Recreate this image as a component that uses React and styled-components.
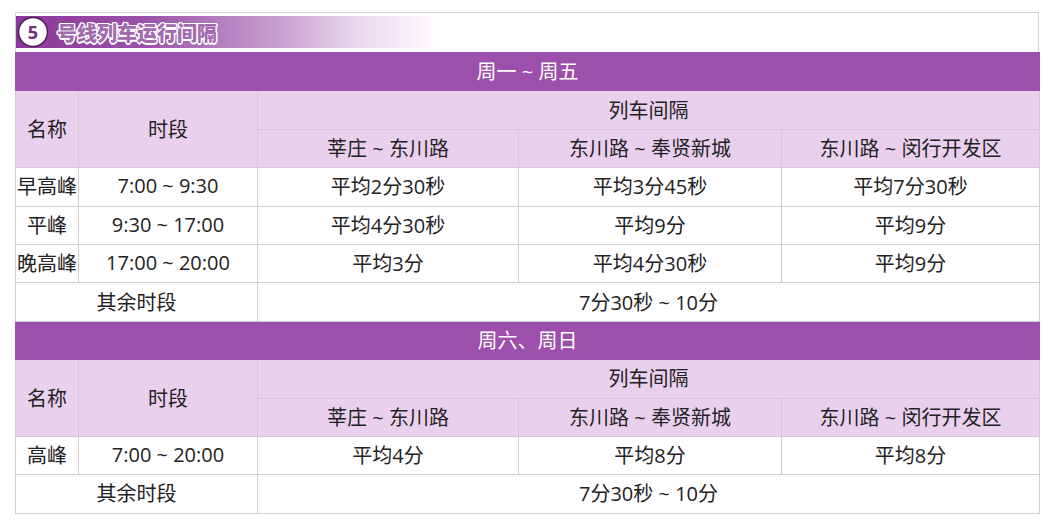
import styled, { createGlobalStyle } from "styled-components";

const GlobalStyle = createGlobalStyle`
  html, body {
    margin: 0;
    padding: 0;
    background: #fff;
  }
  body {
    font-family: "Open Sans", "Noto Sans CJK SC", sans-serif;
    color: #222;
  }
`;

const Page = styled.div`
  padding: 12px 0 0 15px;
`;

const Frame = styled.section`
  width: 1022px;
  border: 1px solid #d4d4d4;
  border-bottom: none;
  padding-top: 3px;
`;

const TitleBar = styled.div`
  height: 32px;
  width: 425px;
  display: flex;
  align-items: center;
  gap: 8px;
  padding-left: 1px;
  background: linear-gradient(
    to right,
    #8a3897 0%,
    #9a52a8 30%,
    #c59ccd 60%,
    #ecdcef 82%,
    #ffffff 100%
  );
`;

const BadgeSvg = styled.svg`
  flex: 0 0 32px;
  display: block;
`;

const Title = styled.h2`
  margin: 0;
  font-family: "Noto Sans CJK SC", sans-serif;
  font-weight: 900;
  font-size: 20px;
  color: #a36ab0;
  text-shadow: -1px -1px 0 #fff, 1px -1px 0 #fff, -1px 1px 0 #fff,
    1px 1px 0 #fff, 0 -1.5px 0 #fff, 0 1.5px 0 #fff, -1.5px 0 0 #fff,
    1.5px 0 0 #fff, 0 0 2px #5a2a66;
`;

const Table = styled.table`
  margin-top: 4px;
  width: 1024px;
  margin-left: -1px;
  border-collapse: collapse;
  table-layout: fixed;
  font-size: 20px;
`;

const Row = styled.tr`
  height: 38.4px;
`;

const Cell = styled.td`
  border: 1px solid ${(p) => (p.$head ? "#d9c4de" : "#cfcfcf")};
  background: ${(p) => (p.$head ? "#e9d1ee" : "#fff")};
  text-align: center;
  vertical-align: middle;
  padding: 0 0 2px;
  white-space: nowrap;
  overflow: hidden;
`;

const BandCell = styled.td`
  background: #9c4fab;
  color: #fff;
  border: 1px solid #9c4fab;
  text-align: center;
  padding: 0 0 2px;
`;

const weekday = {
  band: "周一 ~ 周五",
  routes: ["莘庄 ~ 东川路", "东川路 ~ 奉贤新城", "东川路 ~ 闵行开发区"],
  rows: [
    ["早高峰", "7:00 ~ 9:30", "平均2分30秒", "平均3分45秒", "平均7分30秒"],
    ["平峰", "9:30 ~ 17:00", "平均4分30秒", "平均9分", "平均9分"],
    ["晚高峰", "17:00 ~ 20:00", "平均3分", "平均4分30秒", "平均9分"],
  ],
};

const weekend = {
  band: "周六、周日",
  routes: ["莘庄 ~ 东川路", "东川路 ~ 奉贤新城", "东川路 ~ 闵行开发区"],
  rows: [["高峰", "7:00 ~ 20:00", "平均4分", "平均8分", "平均8分"]],
};

function Badge({ n }) {
  return (
    <BadgeSvg width="32" height="32" viewBox="0 0 32 32">
      <circle cx="16" cy="16" r="14.5" fill="#fff" stroke="#4e2059" strokeWidth="1.6" />
      <text
        x="16"
        y="22.5"
        textAnchor="middle"
        fontFamily="Open Sans, sans-serif"
        fontWeight="700"
        fontSize="18"
        fill="#6b2f7a"
      >
        {n}
      </text>
    </BadgeSvg>
  );
}

function Section({ data }) {
  return (
    <>
      <Row>
        <BandCell colSpan={5}>{data.band}</BandCell>
      </Row>
      <Row>
        <Cell $head rowSpan={2}>
          名称
        </Cell>
        <Cell $head rowSpan={2}>
          时段
        </Cell>
        <Cell $head colSpan={3}>
          列车间隔
        </Cell>
      </Row>
      <Row>
        {data.routes.map((r) => (
          <Cell $head key={r}>
            {r}
          </Cell>
        ))}
      </Row>
      {data.rows.map((row) => (
        <Row key={row[0]}>
          {row.map((c, i) => (
            <Cell key={i}>{c}</Cell>
          ))}
        </Row>
      ))}
      <Row>
        <Cell colSpan={2}>其余时段</Cell>
        <Cell colSpan={3}>7分30秒 ~ 10分</Cell>
      </Row>
    </>
  );
}

export default function App() {
  return (
    <Page>
      <GlobalStyle />
      <Frame>
        <TitleBar>
          <Badge n="5" />
          <Title>号线列车运行间隔</Title>
        </TitleBar>
        <Table>
          <colgroup>
            <col style={{ width: 63 }} />
            <col style={{ width: 179 }} />
            <col style={{ width: 261 }} />
            <col style={{ width: 263 }} />
            <col style={{ width: 258 }} />
          </colgroup>
          <tbody>
            <Section data={weekday} />
            <Section data={weekend} />
          </tbody>
        </Table>
      </Frame>
    </Page>
  );
}
